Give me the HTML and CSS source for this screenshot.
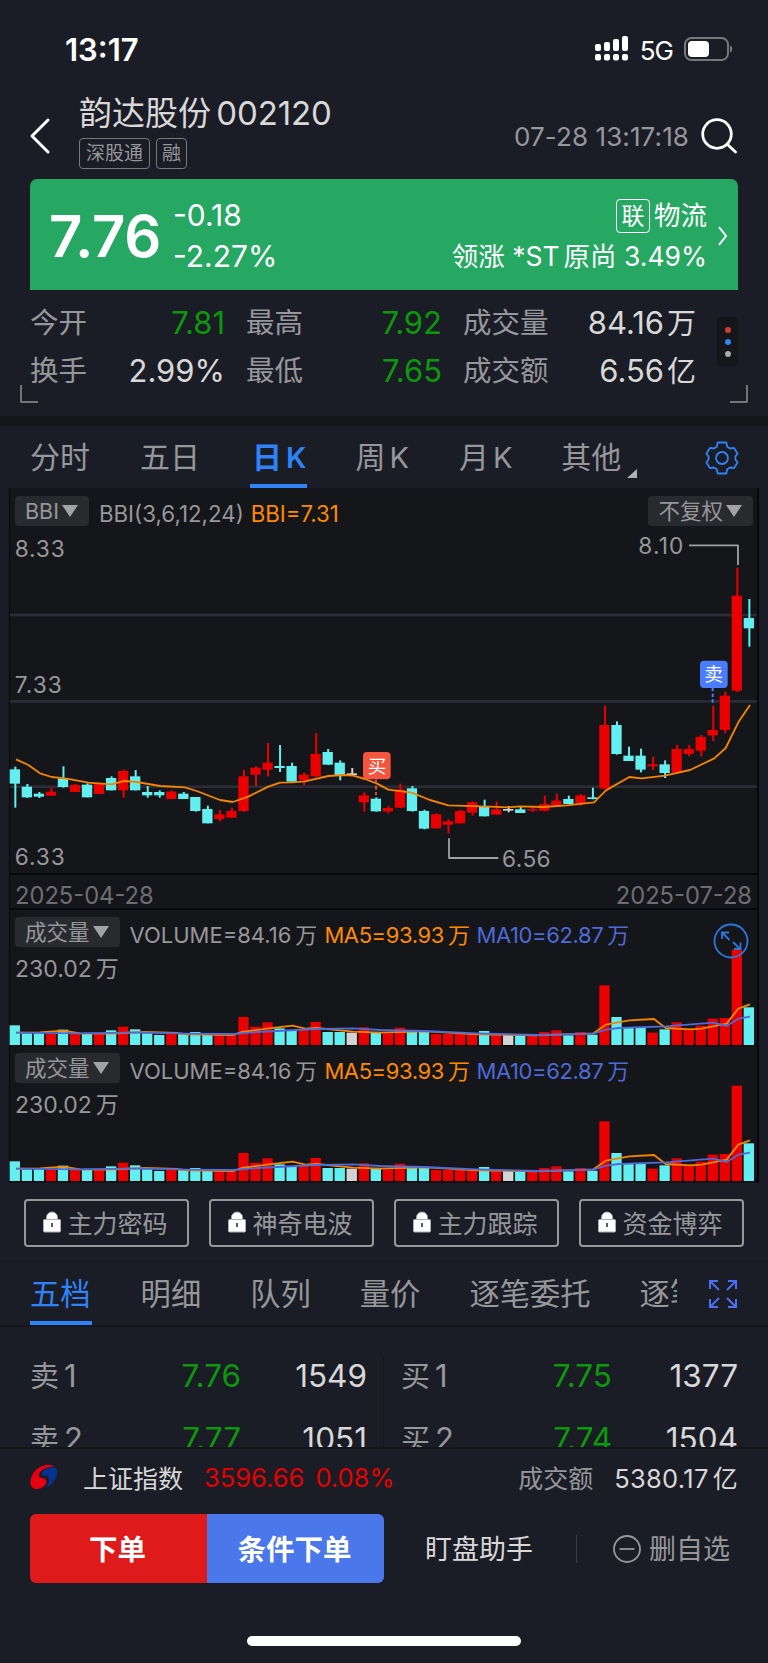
FILE: index.html
```html
<!DOCTYPE html>
<html lang="zh-cn">

<head>
    <meta charset="UTF-8">
    <meta name="viewport" content="width=device-width, initial-scale=1.0">
    <title>韵达股份 002120</title>
    <link rel="stylesheet" href="styles.css">
</head>

<body>

    <div id="app">
        <!-- 状态栏 -->
        <div class="status">
            <span class="time">13:17</span>
            <svg class="signal" width="34" height="26" viewBox="0 0 34 26" fill="#fff">
                <rect x="0" y="8" width="6" height="7" rx="2" />
                <rect x="9" y="6" width="6" height="9" rx="2" />
                <rect x="18" y="3" width="6" height="12" rx="2" />
                <rect x="27" y="0" width="6" height="15" rx="2" />
                <rect x="0" y="18" width="6" height="6.5" rx="2" />
                <rect x="9" y="18" width="6" height="6.5" rx="2" />
                <rect x="18" y="18" width="6" height="6.5" rx="2" />
                <rect x="27" y="18" width="6" height="6.5" rx="2" />
            </svg>
            <span class="net">5G</span>
            <svg width="50" height="24" viewBox="0 0 50 24">
                <rect x="1" y="1" width="43" height="22" rx="6.5" fill="none" stroke="#76787c" stroke-width="2" />
                <rect x="4" y="4" width="21" height="16" rx="4" fill="#fff" />
                <path d="M46 8.500c3 1 3 6 0 7z" fill="#76787c" />
            </svg>
        </div>

        <!-- 标题 -->
        <div class="header">
            <svg class="back" width="22" height="38" viewBox="0 0 22 38">
                <path d="M19 3L3 19l16 16" fill="none" stroke="#fff" stroke-width="3" stroke-linecap="round" stroke-linejoin="round" />
            </svg>
            <div class="name">
                <h1>韵达股份 <b>002120</b></h1>
                <div class="tags"><span>深股通</span><span>融</span></div>
            </div>
            <span class="date">07-28 13:17:18</span>
            <svg class="search" width="38" height="38" viewBox="0 0 38 38" fill="none" stroke="#fff" stroke-width="2.800" stroke-linecap="round">
                <circle cx="17" cy="17" r="14.300" />
                <path d="M27.500 27.500l8 7.500" />
            </svg>
        </div>

        <!-- 报价 -->
        <div class="quote">
            <span class="price">7.76</span>
            <div class="change">
                <p>-0.18</p>
                <p>-2.27%</p>
            </div>
            <div class="sector">
                <p><i>联</i>物流</p>
                <p>领涨 <span class="st">*ST</span>原尚 <span>3.49%</span></p>
            </div>
            <svg width="12" height="22" viewBox="0 0 12 22">
                <path d="M2 2l7 9-7 9" fill="none" stroke="#fff" stroke-width="2" />
            </svg>
        </div>

        <div class="stats">
            <div class="grid">
                <span>今开</span><em class="green">7.81</em>
                <span>最高</span><em class="green">7.92</em>
                <span>成交量</span><em>84.16<u>万</u></em>
                <span>换手</span><em>2.99%</em>
                <span>最低</span><em class="green">7.65</em>
                <span>成交额</span><em>6.56<u>亿</u></em>
            </div>
            <div class="dots"><i></i><i></i><i></i></div>
            <div class="corners"><i></i><i></i></div>
        </div>

        <!-- 周期 -->
        <div class="tabs period">
            <span>分时</span>
            <span>五日</span>
            <span class="on">日<b>K</b></span>
            <span>周<b>K</b></span>
            <span>月<b>K</b></span>
            <span class="more">其他</span>
            <svg class="gear" width="34" height="34" viewBox="0 0 34 34" fill="none" stroke="#2f83f6" stroke-width="1.800" stroke-linejoin="round">
                <path d="M12.700 1.500H21.300L22.200 5.700L25.200 7.500L29 6.900L32.600 12.500L30.400 15.500V18.500L32.600 21.500L29 27.100L25.200 26.500L22.200 28.300L21.300 32.500H12.700L11.800 28.300L8.800 26.500L5 27.100L1.400 21.500L3.600 18.500V15.500L1.400 12.500L5 6.900L8.800 7.500L11.800 5.700Z" />
                <circle cx="17" cy="17" r="6" />
            </svg>
        </div>

        <!-- K线与成交量 -->
        <div class="chart">
            <div class="pane main">
                <svg class="kline" viewBox="27 24 2250 1158"></svg>
                <div class="bar">
                    <span class="pill">BBI<i></i></span>
                    <span class="param">BBI(3,6,12,24)</span>
                    <span class="orange">BBI=7.31</span>
                    <span class="pill right">不复权<i></i></span>
                </div>
            </div>
            <div class="dates"><span>2025-04-28</span><span>2025-07-28</span></div>
            <div class="pane volume">
                <svg class="vol" viewBox="27 30 2250 408"></svg>
                <div class="bar">
                    <span class="pill">成交量<i></i></span>
                    <span>VOLUME=84.16<u>万</u></span>
                    <span class="orange">MA5=93.93<u>万</u></span>
                    <span class="blue">MA10=62.87<u>万</u></span>
                </div>
                <p>230.02<u>万</u></p>
                <svg class="zoom" width="36" height="36" viewBox="0 0 36 36" fill="none" stroke="#2b78dd" stroke-width="1.800">
                    <circle cx="18" cy="18" r="16.500" />
                    <path d="M9 16V9.500h7M9.500 10l7 7M20 19l7 7M27.500 19.500V26H21" />
                </svg>
            </div>
            <div class="pane volume">
                <svg class="vol" viewBox="27 30 2250 408"></svg>
                <div class="bar">
                    <span class="pill">成交量<i></i></span>
                    <span>VOLUME=84.16<u>万</u></span>
                    <span class="orange">MA5=93.93<u>万</u></span>
                    <span class="blue">MA10=62.87<u>万</u></span>
                </div>
                <p>230.02<u>万</u></p>
            </div>
        </div>

        <!-- 锁定功能 -->
        <div class="locks">
            <div><svg class="lock" viewBox="0 0 18 22"><path d="M3.500 9V6.500a5.500 5.500 0 0 1 11 0V9z" fill="#fff" stroke="#a9adbd" /><rect x=".5" y="8.500" width="17" height="12.500" rx="1" fill="#fff" stroke="#a9adbd" /><path d="M9 12v4" stroke="#555a68" stroke-width="2" /></svg>主力密码</div>
            <div><svg class="lock" viewBox="0 0 18 22"><path d="M3.500 9V6.500a5.500 5.500 0 0 1 11 0V9z" fill="#fff" stroke="#a9adbd" /><rect x=".5" y="8.500" width="17" height="12.500" rx="1" fill="#fff" stroke="#a9adbd" /><path d="M9 12v4" stroke="#555a68" stroke-width="2" /></svg>神奇电波</div>
            <div><svg class="lock" viewBox="0 0 18 22"><path d="M3.500 9V6.500a5.500 5.500 0 0 1 11 0V9z" fill="#fff" stroke="#a9adbd" /><rect x=".5" y="8.500" width="17" height="12.500" rx="1" fill="#fff" stroke="#a9adbd" /><path d="M9 12v4" stroke="#555a68" stroke-width="2" /></svg>主力跟踪</div>
            <div><svg class="lock" viewBox="0 0 18 22"><path d="M3.500 9V6.500a5.500 5.500 0 0 1 11 0V9z" fill="#fff" stroke="#a9adbd" /><rect x=".5" y="8.500" width="17" height="12.500" rx="1" fill="#fff" stroke="#a9adbd" /><path d="M9 12v4" stroke="#555a68" stroke-width="2" /></svg>资金博弈</div>
        </div>

        <div class="tabs detail">
            <div class="scroll">
                <span class="on">五档</span>
                <span>明细</span>
                <span>队列</span>
                <span>量价</span>
                <span>逐笔委托</span>
                <span>逐笔</span>
            </div>
            <svg class="expand" width="28" height="28" viewBox="0 0 28 28" fill="none" stroke="#4c6ef0" stroke-width="2">
                <path d="M1 9V1h8M1 1l9 9M19 1h8v8M27 1l-9 9M1 19v8h8M1 27l9-9M27 19v8h-8M27 27l-9-9" />
            </svg>
        </div>

        <!-- 五档 -->
        <div class="book">
            <div class="side">
                <p><span>卖<b>1</b></span><em>7.76</em><strong>1549</strong></p>
                <p><span>卖<b>2</b></span><em>7.77</em><strong>1051</strong></p>
            </div>
            <div class="side">
                <p><span>买<b>1</b></span><em>7.75</em><strong>1377</strong></p>
                <p><span>买<b>2</b></span><em>7.74</em><strong>1504</strong></p>
            </div>
        </div>

        <!-- 指数 -->
        <div class="index">
            <svg width="28" height="26" viewBox="0 0 28 26">
                <path d="M24.500 2.500C17-2 5 3 1 14c-2 7 1 12 7 11 6-1 10-6 8-9-2-3-6-1-7-4C8 8 16 2 24.500 2.500z" fill="#e60012" />
                <path d="M13 7c4-4 11-5 13.500-2C29 11 24 21 14.500 24c4-3 6-8 3-12-2-1-5 0-6-1 0-1 .500-3 1.500-4z" fill="#063291" />
            </svg>
            <span class="label">上证指数</span>
            <span class="red">3596.66</span>
            <span class="red pct">0.08%</span>
            <span class="gray">成交额</span>
            <span class="sum">5380.17<u>亿</u></span>
        </div>

        <div class="actions">
            <button class="buy">下单</button>
            <button class="cond">条件下单</button>
            <span class="helper">盯盘助手</span>
            <span class="remove">
                <svg width="28" height="28" viewBox="0 0 28 28" fill="none" stroke="#96979a" stroke-width="1.800">
                    <circle cx="14" cy="14" r="13" />
                    <path d="M6.500 14h15" />
                </svg><span>删自选</span>
            </span>
        </div>
        <div class="home"></div>
    </div>

    <script src="chart.js"></script>
</body>

</html>
```

FILE: styles.css
```css
* {
    padding: 0;
    margin: 0;
    box-sizing: border-box;
}

body {
    width: 768px;
    background-color: #1b1d26;
    color: #d8d8d8;
    font-family: Inter, "Noto Sans CJK SC", sans-serif;
    font-weight: 400;
}

i,
em {
    font-style: normal;
}

u {
    text-decoration: none;
    margin-left: 4px;
}

svg {
    display: block;
    flex: none;
}

#app {
    height: 1663px;
    overflow: hidden;
}

/* 状态栏 */
.status {
    height: 98px;
    display: flex;
    align-items: center;
    padding: 0 34px 0 65px;
    color: #fff;
}

.time {
    font-size: 31px;
    font-weight: 600;
    margin-right: auto;
}

.net {
    font-size: 26px;
    margin: 2px 11px 0 11px;
    letter-spacing: -1px;
    font-weight: 400;
}

/* 标题 */
.header {
    height: 81px;
    display: flex;
    padding: 0 30px 0 29px;
}

.back {
    margin-top: 19px;
}

.name {
    margin-left: 28px;
    margin-right: auto;
}

.name h1 {
    font-size: 33px;
    line-height: 38px;
    font-weight: 400;
    margin-top: -4px;
    white-space: nowrap;
}

.name b {
    font-weight: 400;
    letter-spacing: -.1px;
    margin-left: -4px;
}

.tags {
    display: flex;
    gap: 6px;
    margin-top: 6px;
}

.tags span {
    height: 31px;
    border: 1px solid #77797d;
    border-radius: 4px;
    color: #96979a;
    font-size: 19px;
    line-height: 29px;
    padding: 0 6px;
}

.tags span:last-child {
    padding: 0 5px;
}

.date {
    font-size: 26px;
    line-height: 78px;
    letter-spacing: .1px;
    color: #96979a;
}

.search {
    margin: 19px 0 0 11px;
}

/* 报价 */
.quote {
    height: 111px;
    margin: 0 30px;
    border-radius: 7px 7px 0 0;
    background-color: #26a862;
    color: #fff;
    display: flex;
    align-items: center;
    padding: 2px 9px 0 19px;
}

.price {
    font-size: 58px;
    font-weight: 600;
    width: 124px;
    letter-spacing: -.2px;
}

.change,
.sector {
    font-size: 30px;
    line-height: 41px;
}

.sector {
    margin: 0 10px 0 auto;
    text-align: right;
    font-size: 26.5px;
}

.sector i {
    display: inline-block;
    width: 34px;
    height: 34px;
    line-height: 32px;
    border: 1px solid #fff;
    border-radius: 4px;
    font-size: 23px;
    text-align: center;
    margin-right: 4px;
    vertical-align: 1px;
}

.st {
    margin-right: 4px;
}

/* 行情 */
.stats {
    height: 136px;
    border-bottom: 10px solid #15161a;
    position: relative;
    padding: 9px 30px 0;
    display: flex;
    font-size: 28.5px;
}

.grid {
    display: grid;
    grid-template-columns: 58px 137px 79px 138px 108px 146px;
    grid-auto-rows: 48px;
    line-height: 48px;
}

.grid span {
    color: #96979a;
    white-space: nowrap;
    padding-left: 21px;
}

.grid span:nth-child(6n + 1) {
    padding-left: 0;
}

.grid em {
    text-align: right;
    font-size: 31px;
}

.grid u {
    font-size: 29px;
    margin-left: 3px;
}

.green,
.book em {
    color: #0b990b;
}

.dots {
    width: 21px;
    height: 49px;
    margin: 18px 0 0 21px;
    border-radius: 4px;
    background-color: #15161a;
    display: flex;
    flex-direction: column;
    align-items: center;
    justify-content: center;
    gap: 6px;
}

.dots i {
    width: 6px;
    height: 6px;
    border-radius: 50%;
    background-color: #d0402c;
}

.dots i:nth-child(2) {
    background-color: #2f83f6;
}

.dots i:nth-child(3) {
    background-color: #a9a9ab;
}

.corners {
    position: absolute;
    left: 20px;
    right: 20px;
    top: 95px;
    display: flex;
    justify-content: space-between;
}

.corners i {
    width: 18px;
    height: 18px;
    border: solid #747579;
    border-width: 0 0 2px 2px;
    border-radius: 0 0 0 2px;
}

.corners i:last-child {
    border-width: 0 2px 2px 0;
    border-radius: 0 0 2px 0;
}

/* 选项卡 */
.tabs {
    height: 62px;
    display: flex;
    gap: 50px;
    padding: 0 30px;
    font-size: 30px;
    line-height: 62px;
    color: #96979a;
    position: relative;
}

.tabs span {
    white-space: nowrap;
    position: relative;
}

.tabs b {
    font-weight: inherit;
    font-size: 29px;
    margin-left: 4px;
}

.tabs .on {
    color: #2f83f6;
}

.tabs .on::after {
    content: "";
    position: absolute;
    left: 0;
    right: 0;
    bottom: 0;
    height: 4px;
    background-color: #2f83f6;
}

.period .on {
    font-weight: 600;
    padding: 0 1px 0 2px;
}

.period .on + span {
    margin-left: -2px;
}

.more {
    margin-left: -1px;
}

.more::after {
    content: "";
    position: absolute;
    right: -16px;
    bottom: 10px;
    border: solid transparent;
    border-width: 0 0 9px 10px;
    border-bottom-color: #b0b0b2;
}

.gear {
    margin: 15px -1px 0 auto;
}

/* 图表 */
.chart {
    margin: 0 9px;
    height: 695px;
    background-color: #15161a;
    border: solid #07080b;
    border-width: 0 2px 0 1px;
    color: #96979a;
}

.pane {
    position: relative;
    border-bottom: 2px solid #07080b;
}

.main {
    height: 387px;
}

.kline,
.vol {
    position: absolute;
    left: -1px;
    top: 0;
    width: 750px;
}

.kline text {
    font-size: 68px;
    fill: #96979a;
}

.bar {
    position: relative;
    display: flex;
    align-items: center;
    padding: 8px 4px 0 5px;
    font-size: 22px;
    line-height: 30px;
    white-space: nowrap;
}

.bar span {
    margin-right: 7px;
    position: relative;
    top: 3px;
}

.bar .param {
    font-size: 22.3px;
}

.main .orange {
    font-size: 22.2px;
}

.bar .pill {
    height: 30px;
    border-radius: 4px;
    background-color: #282a2e;
    padding: 0 11px 0 10px;
    font-size: 21.5px;
    display: flex;
    align-items: center;
    margin-right: 10px;
    top: 0;
}

.pill i {
    border: 8px solid transparent;
    border-top: 12px solid #a3a3a5;
    border-bottom: 0;
    margin-left: 3px;
}

.bar .right {
    margin-left: auto;
    margin-right: 0;
}

.volume .orange,
.volume .blue {
    letter-spacing: -.4px;
}

.orange {
    color: #ff8a00;
}

.blue {
    color: #4c6ad8;
}

.dates {
    height: 35px;
    border-bottom: 2px solid #07080b;
    display: flex;
    justify-content: space-between;
    padding: 5px 5px 0 5px;
    font-size: 23.7px;
    line-height: 32px;
    color: #6d6e72;
}

.volume {
    height: 136px;
}

.volume .bar {
    padding-top: 7px;
}

.volume p {
    font-size: 23px;
    line-height: 30px;
    padding: 7px 5px;
    position: relative;
}

.zoom {
    position: absolute;
    right: 8px;
    top: 13px;
}

/* 锁定功能 */
.locks {
    height: 79px;
    border-bottom: 1px solid #171920;
    padding: 16px 24px 0;
    display: flex;
    gap: 20px;
}

.locks div {
    flex: 1;
    height: 48px;
    border: 2px solid #96979a;
    border-radius: 4px;
    display: flex;
    align-items: center;
    justify-content: center;
    gap: 6px;
    padding: 0 2px 2px 0;
    font-size: 25px;
    color: #96979a;
    white-space: nowrap;
}

.lock {
    width: 18px;
    height: 22px;
}

.detail {
    height: 65px;
    border-bottom: 2px solid #15161a;
    justify-content: space-between;
    line-height: 64px;
    gap: 0;
}

.scroll {
    width: 647px;
    overflow: hidden;
    display: flex;
    gap: 49px;
    font-size: 30.3px;
}

.detail .on {
    padding-right: 1px;
}

.expand {
    margin-top: 18px;
    margin-right: 1px;
}

/* 五档 */
.book {
    height: 120px;
    overflow: hidden;
    padding: 17px 30px 0;
    display: flex;
}

.side {
    width: 50%;
    height: 126px;
    margin-top: 12px;
    padding-right: 16px;
    border-right: 1px solid #15161a;
}

.side:last-child {
    padding: 0 0 0 17px;
    border: 0;
}

.side p {
    display: flex;
    height: 63px;
    line-height: 39px;
    font-size: 30.5px;
}

.side span {
    color: #96979a;
    width: 80px;
    font-size: 29px;
}

.side b {
    font-weight: 400;
    font-size: 31px;
    margin-left: 5px;
}

.side em {
    width: 131px;
    text-align: right;
    font-size: 31.5px;
}

.side strong {
    flex: 1;
    font-weight: 400;
    text-align: right;
    font-size: 31.5px;
}

/* 指数 */
.index {
    height: 66px;
    border-top: 2px solid #15161a;
    padding: 0 30px 9px;
    display: flex;
    align-items: center;
    font-size: 25.5px;
}

.label {
    font-size: 25px;
    margin: 0 21px 0 25px;
}

.red {
    color: #e60000;
    margin-right: 11px;
    padding-top: 2px;
}

.gray {
    color: #96979a;
    font-size: 25px;
    margin: 0 21px 0 auto;
}

.sum {
    letter-spacing: .3px;
}

.sum u {
    font-size: 25px;
}

.actions {
    display: flex;
    align-items: center;
    height: 69px;
    margin: 1px 30px 0;
    font-size: 27px;
}

.actions button {
    width: 177px;
    height: 69px;
    border: 0;
    color: #fff;
    font-family: inherit;
    font-size: 28.5px;
    font-weight: 600;
    padding: 0 2px 3px 0;
}

.buy {
    background-color: #de1a1a;
    border-radius: 6px 0 0 6px;
}

.cond {
    background-color: #4a77ea;
    border-radius: 0 6px 6px 0;
}

.helper {
    width: 192px;
    padding: 0 0 3px 41px;
}

.remove {
    color: #96979a;
    display: flex;
    align-items: center;
    gap: 8px;
    height: 28px;
    padding-left: 36px;
    border-left: 1px solid #3b3d46;
    white-space: nowrap;
}

.remove span {
    padding-bottom: 3px;
}

.home {
    width: 274px;
    height: 10px;
    border-radius: 5px;
    background-color: #fff;
    margin: 53px auto 0;
}
```

FILE: chart.js
```js
// 颜色
const COLORS = { r: "#ea0000", c: "#63efef", g: "#d3d3d3" };

// 第一根的位置、间距、宽度
const LEFT = 29;
const STEP = 36.1;
const WIDTH = 31;

// 每根K线: [颜色, 实体上, 实体下, 最高, 最低, 成交量柱顶]
const list = [
    ["c", 868, 911, 860, 983, 376], ["c", 920, 952, 912, 954, 400],
    ["c", 941, 950, 936, 954, 400], ["r", 935, 947, 923, 947, 400],
    ["c", 896, 921, 859, 923, 389], ["r", 915, 936, 912, 936, 400],
    ["c", 914, 952, 910, 952, 400], ["r", 911, 942, 911, 942, 401],
    ["c", 894, 931, 889, 931, 391], ["r", 873, 931, 869, 953, 380],
    ["c", 889, 931, 870, 931, 388], ["c", 936, 946, 918, 953, 400],
    ["c", 936, 946, 931, 953, 405], ["r", 935, 957, 931, 957, 401],
    ["c", 941, 957, 936, 957, 402], ["c", 951, 993, 951, 995, 396],
    ["c", 987, 1030, 977, 1030, 404], ["r", 1003, 1017, 990, 1024, 404],
    ["r", 993, 1013, 983, 1013, 405], ["r", 889, 993, 870, 995, 351],
    ["r", 863, 884, 859, 918, 380], ["r", 848, 869, 789, 889, 367],
    ["c", 858, 864, 795, 876, 385], ["c", 858, 905, 848, 905, 391],
    ["r", 884, 900, 878, 916, 388], ["r", 822, 889, 759, 892, 366],
    ["c", 816, 854, 807, 854, 396], ["c", 848, 885, 841, 901, 396],
    ["g", 880, 885, 864, 886, 398], ["r", 946, 967, 937, 995, 382],
    ["c", 956, 994, 952, 995, 399], ["r", 984, 994, 978, 1000, 400],
    ["r", 928, 983, 911, 984, 383], ["c", 925, 993, 918, 995, 396],
    ["c", 993, 1046, 989, 1048, 396], ["r", 1003, 1045, 1000, 1045, 402],
    ["r", 1024, 1034, 1018, 1060, 402], ["r", 993, 1030, 989, 1030, 402],
    ["r", 967, 998, 964, 1007, 403], ["c", 980, 1009, 959, 1009, 393],
    ["r", 988, 1004, 965, 1004, 404], ["g", 987, 992, 978, 997, 405],
    ["c", 988, 999, 981, 999, 405], ["r", 988, 992, 981, 995, 406],
    ["r", 972, 992, 947, 994, 396], ["r", 962, 976, 941, 976, 391],
    ["c", 957, 972, 947, 972, 406], ["r", 946, 970, 942, 977, 396],
    ["c", 952, 957, 923, 958, 404], ["r", 735, 926, 677, 926, 256],
    ["c", 735, 822, 724, 824, 351], ["c", 827, 843, 800, 843, 384],
    ["c", 827, 869, 806, 877, 384], ["r", 853, 859, 830, 870, 398],
    ["c", 853, 879, 841, 894, 388], ["r", 807, 878, 795, 878, 367],
    ["r", 807, 822, 795, 829, 386], ["r", 771, 812, 765, 829, 377],
    ["r", 750, 766, 677, 783, 356], ["r", 647, 750, 635, 760, 354],
    ["r", 347, 632, 263, 636, 149], ["c", 414, 445, 357, 500, 322]
];

const bbi = "48,838 85,855 120,880 155,891 200,896 265,908 335,913 372,903 410,906 480,918 555,922 590,933 660,960 698,966 745,950 805,920 840,908 878,907 915,904 985,888 1030,885 1060,887 1095,897 1130,910 1165,929 1235,938 1290,960 1345,976 1470,980 1525,982 1560,979 1630,981 1700,976 1782,967 1818,931 1888,891 1925,895 1995,887 2070,870 2143,835 2177,804 2215,727 2250,675";
const ma5 = "48,398 120,397 190,392 240,400 330,401 430,396 530,399 560,403 700,405 725,396 800,386 878,377 915,386 950,384 1060,395 1140,398 1280,394 1430,403 1610,406 1700,403 1780,400 1818,374 1888,361 1962,357 1997,384 2070,388 2105,386 2180,371 2215,326 2250,313";
const ma10 = "48,398 240,400 420,397 560,401 700,402 770,396 950,387 1060,385 1140,390 1270,393 1430,400 1610,405 1780,401 1818,389 1855,384 1997,379 2140,368 2180,378 2215,356 2250,350";

const rect = (x, y, w, h, fill, rx = 0) => `<rect x="${x}" y="${y}" width="${w}" height="${h}" rx="${rx}" fill="${fill}"/>`;
const line = (points, color, w = 5.5) => `<polyline points="${points}" fill="none" stroke="${color}" stroke-width="${w}" stroke-linejoin="round"/>`;

// K线图
function drawKline() {
    let html = "";
    // 网格线
    [405, 664, 920].forEach(y => {
        html += rect(30, y - 4, 2240, 8, "#2b2c35");
    });
    list.forEach(([type, top, bottom, high, low], i) => {
        const x = LEFT + i * STEP;
        html += rect(x + 14, high, 6, low - high, COLORS[type]);
        html += rect(x, top, WIDTH, bottom - top, COLORS[type]);
    });
    html += line(bbi, "#f58500");
    // 最高价与最低价
    html += line("2067,196 2214,196 2214,255", "#a0a0a2");
    html += line("1347,1075 1347,1134 1495,1134", "#a0a0a2");
    html += `<text x="1915" y="221" textLength="135">8.10</text>`;
    html += `<text x="1506" y="1160" textLength="146">6.56</text>`;
    html += `<text x="44" y="230" textLength="150">8.33</text>`;
    html += `<text x="44" y="638" textLength="141">7.33</text>`;
    html += `<text x="44" y="1154" textLength="150">6.33</text>`;
    // 买卖点
    html += `<path d="M1128 898v48" stroke="#f3553f" stroke-width="5" stroke-dasharray="12 7"/>`;
    html += rect(1089, 816, 83, 82, "#f3553f", 12);
    html += `<text x="1131" y="878" text-anchor="middle" style="fill:#fff;font-size:56px">买</text>`;
    html += `<path d="M2138 624v46" stroke="#4a7dfc" stroke-width="6" stroke-dasharray="10 7"/>`;
    html += rect(2100, 542, 83, 82, "#4a7dfc", 12);
    html += `<text x="2141" y="604" text-anchor="middle" style="fill:#fff;font-size:56px">卖</text>`;
    document.querySelector(".kline").innerHTML = html;
}

// 成交量
function drawVolume(svg) {
    let html = "";
    list.forEach((item, i) => {
        html += rect(LEFT + i * STEP, item[5], WIDTH, 435 - item[5], COLORS[item[0]]);
    });
    html += line(ma5, "#f58500");
    html += line(ma10, "#4c6ad8");
    svg.innerHTML = html;
}

drawKline();
document.querySelectorAll(".vol").forEach(drawVolume);
```
